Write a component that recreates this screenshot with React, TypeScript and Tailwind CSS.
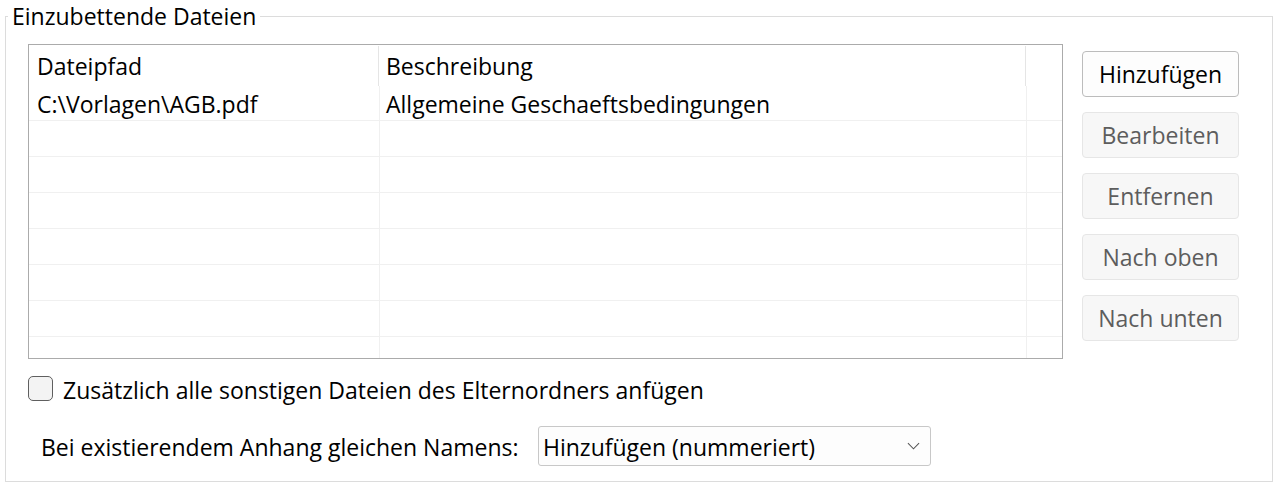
import React, { useState } from 'react';

type Attachment = {
  path: string;
  description: string;
};

const ATTACHMENTS: Attachment[] = [{ path: 'C:\\Vorlagen\\AGB.pdf', description: 'Allgemeine Geschaeftsbedingungen' }];
const EMPTY_ROWS = 6;

const ChevronDown: React.FC<{ className?: string }> = ({ className }) => (
  <svg className={className} viewBox="0 0 14 8" fill="none" stroke="currentColor" strokeWidth="1.1">
    <polyline points="1,1 7,7 13,1" />
  </svg>
);

const SideButton: React.FC<{ label: string; disabled?: boolean }> = ({ label, disabled }) => (
  <button
    disabled={disabled}
    className={
      disabled
        ? 'h-[46px] w-full rounded-[4px] border border-[#e6e6e6] bg-[#f7f7f7] text-[#5d5d5d] leading-none pt-[1px]'
        : 'h-[46px] w-full rounded-[4px] border border-[#bcbcbc] bg-[#fdfdfd] text-black leading-none pt-[1px]'
    }
  >
    {label}
  </button>
);

export default function App() {
  const [includeSiblings, setIncludeSiblings] = useState(false);

  return (
    <div className="w-[1274px] h-[483px] bg-white text-[23px] text-black" style={{ fontFamily: '"Open Sans", "Noto Sans", sans-serif' }}>
      <fieldset className="ml-[5px] w-[1268px] h-[482px] border border-[#dcdcdc] p-0 m-0">
        <legend className="ml-[2px] px-[4px] leading-[32px]">Einzubettende Dateien</legend>

        <div className="pl-[22px] pt-[12px]">
          <div className="flex gap-[19px]">
            {/* Tabelle */}
            <div className="w-[1035px] h-[315px] border border-[#ababab] overflow-hidden leading-none">
              <div className="flex h-[41px] items-center">
                <div className="w-[350px] h-[40px] mt-[1px] flex items-center pl-[8px] pt-[1px] border-r border-[#e5e5e5]">Dateipfad</div>
                <div className="w-[647px] h-[40px] mt-[1px] flex items-center pl-[7px] pt-[1px] border-r border-[#e5e5e5]">Beschreibung</div>
                <div className="flex-1" />
              </div>
              {ATTACHMENTS.map((a) => (
                <div key={a.path} className="flex h-[35px] border-b border-[#f0f0f0]">
                  <div className="w-[351px] flex items-center pl-[8px] pt-[2px] border-r border-[#f0f0f0]">{a.path}</div>
                  <div className="w-[647px] flex items-center pl-[6px] pt-[2px] border-r border-[#f0f0f0]">{a.description}</div>
                  <div className="flex-1" />
                </div>
              ))}
              {Array.from({ length: EMPTY_ROWS }).map((_, i) => (
                <div key={i} className="flex h-[36px] border-b border-[#f0f0f0]">
                  <div className="w-[351px] border-r border-[#f0f0f0]" />
                  <div className="w-[647px] border-r border-[#f0f0f0]" />
                  <div className="flex-1" />
                </div>
              ))}
              <div className="flex h-[30px]">
                <div className="w-[351px] border-r border-[#f0f0f0]" />
                <div className="w-[647px] border-r border-[#f0f0f0]" />
                <div className="flex-1" />
              </div>
            </div>

            {/* Buttons */}
            <div className="w-[157px] pt-[7px] flex flex-col gap-[15px]">
              <SideButton label="Hinzufügen" />
              <SideButton label="Bearbeiten" disabled />
              <SideButton label="Entfernen" disabled />
              <SideButton label="Nach oben" disabled />
              <SideButton label="Nach unten" disabled />
            </div>
          </div>

          <label className="mt-[14px] flex items-center gap-[10px] w-fit cursor-pointer">
            <input
              type="checkbox"
              checked={includeSiblings}
              onChange={(e) => setIncludeSiblings(e.target.checked)}
              className="appearance-none w-[25px] h-[25px] mb-[4px] rounded-[5px] border border-[#5f5f5f] bg-[#f3f3f3] checked:bg-[#005fb8]"
            />
            <span>Zusätzlich alle sonstigen Dateien des Elternordners anfügen</span>
          </label>

          <div className="mt-[18px] flex items-center">
            <span className="ml-[13px] w-[497px] pt-[3px]">Bei existierendem Anhang gleichen Namens:</span>
            <div className="w-[393px] h-[40px] rounded-[3px] border border-[#c8c8c8] bg-[#fdfdfd] flex items-center pl-[4px] pr-[10px]">
              <span className="flex-1 pt-[3px]">Hinzufügen (nummeriert)</span>
              <ChevronDown className="w-[13px] h-[8px] text-[#555]" />
            </div>
          </div>
        </div>
      </fieldset>
    </div>
  );
}
